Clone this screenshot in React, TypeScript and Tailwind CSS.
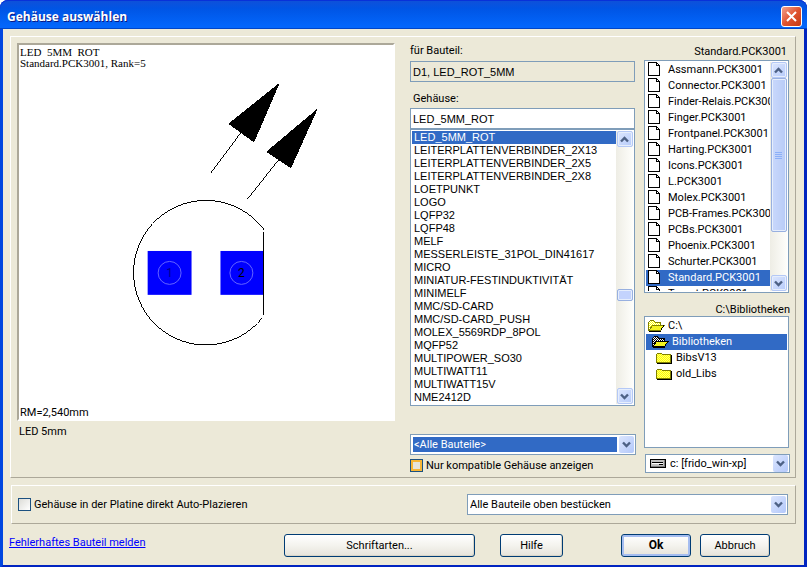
import type { ReactNode } from "react";

const packages = [
  "LED_5MM_ROT",
  "LEITERPLATTENVERBINDER_2X13",
  "LEITERPLATTENVERBINDER_2X5",
  "LEITERPLATTENVERBINDER_2X8",
  "LOETPUNKT",
  "LOGO",
  "LQFP32",
  "LQFP48",
  "MELF",
  "MESSERLEISTE_31POL_DIN41617",
  "MICRO",
  "MINIATUR-FESTINDUKTIVITÄT",
  "MINIMELF",
  "MMC/SD-CARD",
  "MMC/SD-CARD_PUSH",
  "MOLEX_5569RDP_8POL",
  "MQFP52",
  "MULTIPOWER_SO30",
  "MULTIWATT11",
  "MULTIWATT15V",
  "NME2412D",
];

const libraries = [
  "Assmann",
  "Connector",
  "Finder-Relais",
  "Finger",
  "Frontpanel",
  "Harting",
  "Icons",
  "L",
  "Molex",
  "PCB-Frames",
  "PCBs",
  "Phoenix",
  "Schurter",
  "Standard",
  "Target",
];

function Chevron({ up = false }: { up?: boolean }) {
  return (
    <svg width="9" height="7" viewBox="0 0 9 7" className={up ? "rotate-180" : ""} aria-hidden="true">
      <path d="M1 1.5 4.5 5 8 1.5" fill="none" stroke="#4d6185" strokeWidth="2.4" />
    </svg>
  );
}

function ScrollButton({ up = false, label }: { up?: boolean; label: string }) {
  return (
    <button
      type="button"
      aria-label={label}
      className="flex h-4 w-4 shrink-0 items-center justify-center rounded-xs border border-[#b4c8f6] bg-linear-to-br from-[#dce6fe] to-[#b6cbfa] shadow-[inset_0_0_0_1px_#e6eefc]"
    >
      <Chevron up={up} />
    </button>
  );
}

function ScrollBar({ children }: { children: ReactNode }) {
  return (
    <div className="flex w-[17px] shrink-0 flex-col items-center bg-linear-to-r from-[#eeede5] to-[#fefefb]">
      <ScrollButton up label="Nach oben" />
      <div className="flex w-4 flex-1 flex-col">{children}</div>
      <ScrollButton label="Nach unten" />
    </div>
  );
}

function Combo({
  id,
  label,
  options,
  selected = false,
  icon,
}: {
  id: string;
  label: string;
  options: string[];
  selected?: boolean;
  icon?: ReactNode;
}) {
  return (
    <div className="grid items-center border border-[#7f9db9] bg-white">
      <select
        id={id}
        aria-label={label}
        className={
          "col-start-1 row-start-1 w-full appearance-none border-white outline-none " +
          (selected
            ? "h-[19px] border-2 border-r-[18px] bg-[#316ac5] pl-px leading-[15px] text-white"
            : icon
              ? "h-[17px] border-r-[18px] bg-white pl-6 leading-[17px]"
              : "h-[19px] border-r-[18px] bg-white pl-[2px] leading-[19px]")
        }
      >
        {options.map((o) => (
          <option key={o}>{o}</option>
        ))}
      </select>
      {icon && <span className="pointer-events-none col-start-1 row-start-1 ml-1 justify-self-start">{icon}</span>}
      <span className="pointer-events-none col-start-1 row-start-1 mr-px flex h-[17px] w-[15px] items-center justify-center self-center justify-self-end rounded-xs bg-linear-to-br from-[#dce6fe] to-[#b3c8fa]">
        <Chevron />
      </span>
    </div>
  );
}

function PushButton({ children, className, strong = false }: { children: ReactNode; className: string; strong?: boolean }) {
  return (
    <button
      type="button"
      className={
        "h-[23px] shrink-0 rounded-[3px] border border-[#003c74] bg-linear-to-b from-white via-[#f4f3ee] to-[#e6e3da] " +
        (strong ? "text-[12px] font-bold shadow-[inset_0_0_0_2px_#a5bdf0] " : "shadow-[inset_-1px_-1px_0_#d9d5c8] ") +
        className
      }
    >
      {children}
    </button>
  );
}

function PageIcon() {
  return (
    <svg width="13" height="14" viewBox="0 0 13 14" shapeRendering="crispEdges" aria-hidden="true">
      <path d="M.5.5h8l3 3v10H.5z" fill="#fff" stroke="#000" />
      <path d="M8.5.5v3h3" fill="none" stroke="#000" />
    </svg>
  );
}

function Dither({ id, a, b }: { id: string; a: string; b: string }) {
  return (
    <pattern id={id} width="2" height="2" patternUnits="userSpaceOnUse">
      <path d="M0 0h2v2H0z" fill={a} />
      <path d="M0 0h1v1H0zM1 1h1v1H1z" fill={b} />
    </pattern>
  );
}

function ClosedFolder() {
  return (
    <svg width="16" height="13" viewBox="0 0 16 13" shapeRendering="crispEdges" aria-hidden="true">
      <Dither id="closed" a="#ffff00" b="#ffff70" />
      <path d="M.5 11.5v-8l1-1h4l1 1h8v8z" fill="url(#closed)" stroke="#808000" />
      <path d="M1 12.5h14.5V4" fill="none" stroke="#000" />
    </svg>
  );
}

function OpenFolder({ current = false }: { current?: boolean }) {
  const back = current ? "open-current" : "open-back";
  const front = current ? "front-current" : "front";
  return (
    <svg width="17" height="13" viewBox="0 0 17 13" shapeRendering="crispEdges" aria-hidden="true">
      <Dither id={back} a={current ? "#000" : "#ffff00"} b="#fff" />
      <Dither id={front} a="#ffff00" b="#e8e840" />
      <path
        d="M.5 11.5v-8l2-2h3l2 2h5v3"
        fill={current ? "url(#open-current)" : "url(#open-back)"}
        stroke={current ? "#000" : "#808000"}
      />
      <path
        d="M1 11.5 4.5 6.5h11.5l-3.5 5z"
        fill={current ? "url(#front-current)" : "url(#front)"}
        stroke={current ? "#000" : "#808000"}
      />
      <path d="M1 12.5h12M12.5 11.5l3.5-5" fill="none" stroke="#000" />
    </svg>
  );
}

function DriveIcon() {
  return (
    <svg width="16" height="9" viewBox="0 0 16 9" shapeRendering="crispEdges" aria-hidden="true">
      <rect x=".5" y=".5" width="15" height="8" fill="#c0c0c0" stroke="#000" />
      <path d="M2 3.5h11" stroke="#000" />
      <path d="M2 4.5h11" stroke="#fff" />
      <path d="M1 7.5h14M14.5 1v7" stroke="#808080" />
      <path d="M9 5.5h4" stroke="#000" />
    </svg>
  );
}

function PartDrawing() {
  return (
    <svg className="h-[338px] w-full" viewBox="18 69 375 338" role="img" aria-label="LED 5mm">
      <g stroke="#000" fill="none" shapeRendering="crispEdges">
        <path d="M210.5 172.5 240 133M247.5 198.5 278 160" />
        <path d="M278.5 83.5 228.5 123.5 253.5 141.5zM316.5 109.5 266.5 151.5 290.5 167.5z" fill="#000" />
        <path d="M263.5 229.5A72.5 72.5 0 1 0 262 318" />
      </g>
      <g fill="#00f">
        <rect x="147" y="251" width="44" height="44" />
        <rect x="220" y="251" width="43" height="44" />
      </g>
      <path d="M263.5 232v83" stroke="#000" shapeRendering="crispEdges" />
      <g fill="none" stroke="#6464ff">
        <circle cx="169" cy="273" r="11.5" />
        <circle cx="241" cy="273" r="11.5" />
      </g>
      <g textAnchor="middle" className="text-[12px]">
        <text x="169" y="277" fill="#00008b">1</text>
        <text x="241" y="277">2</text>
      </g>
    </svg>
  );
}

function Folder({ name, className, icon }: { name: string; className: string; icon: ReactNode }) {
  return (
    <li role="option" aria-selected={name === "Bibliotheken"} className={"flex h-4 items-center pb-[2px] " + className}>
      <span className="w-5 shrink-0">{icon}</span>
      {name}
    </li>
  );
}

export default function App() {
  return (
    <div className="bg-white font-[Roboto,'Liberation_Sans',sans-serif] text-[11px] leading-[13px] text-black">
      <div className="rounded-t-lg bg-[#0831d9] bg-linear-to-r from-[#0831d9] via-[#0855dd] to-[#001ea0]">
        <header className="flex h-[29px] items-center justify-between rounded-t-lg bg-linear-to-b from-[#0f50d8] from-0% via-[#0055e5] via-30% to-[#0366fb] to-90% pr-[5px] pl-[7px] shadow-[inset_0_1px_0_#0831d9,inset_0_-1px_0_#0046c8]">
          <h1 className="pt-1 font-['Open_Sans',sans-serif] text-[12px] leading-5 font-bold text-white [text-shadow:1px_1px_#0a1883]">
            Gehäuse auswählen
          </h1>
          <button
            type="button"
            aria-label="Schließen"
            className="mt-[3px] flex h-[21px] w-[21px] items-center justify-center rounded-[3px] border border-white bg-linear-to-br from-[#f0a08c] via-[#e0532f] to-[#c63a12]"
          >
            <svg width="11" height="11" viewBox="0 0 11 11" aria-hidden="true">
              <path d="m1 1 9 9m0-9-9 9" stroke="#fff" strokeWidth="2" />
            </svg>
          </button>
        </header>

        <div className="border-x-[3px] border-b-[3px] border-[#0046e0] border-r-[#0024c0] border-b-[#0024c0]">
          <main className="bg-[#ece9d8] pt-[7px] pr-2 pb-2 pl-[7px]">
            <section className="flex border border-t-white border-r-[#aca899] border-b-[#aca899] border-l-white pt-[6px] pr-[5px] pb-1 pl-[6px]">
              <figure className="min-w-0 flex-1">
                <div className="border-2 border-t-[#aca899] border-r-white border-b-white border-l-[#aca899] bg-white">
                  <div className="pt-[2px] pl-px font-['Liberation_Serif',serif] text-[11px] leading-[11px]">
                    <p className="whitespace-pre">LED  5MM  ROT</p>
                    <p>Standard.PCK3001, Rank=5</p>
                  </div>
                  <PartDrawing />
                  <p className="pl-px leading-3">RM=2,540mm</p>
                </div>
                <figcaption className="pt-1 pl-[2px]">LED 5mm</figcaption>
              </figure>

              <div className="ml-[15px] flex w-[226px] shrink-0 flex-col">
                <label htmlFor="part" className="leading-4">für Bauteil:</label>
                <input
                  id="part"
                  readOnly
                  defaultValue="D1, LED_ROT_5MM"
                  className="mt-[2px] mr-px h-[21px] border border-[#7f9db9] bg-[#ece9d8] px-[2px] font-['Liberation_Sans',Arial,sans-serif] outline-none"
                />
                <label htmlFor="package" className="mt-2 pl-[3px] leading-[18px]">Gehäuse:</label>
                <input
                  id="package"
                  defaultValue="LED_5MM_ROT"
                  className="mr-px h-[21px] border border-[#7f9db9] bg-white px-[2px] font-['Liberation_Sans',Arial,sans-serif] outline-none"
                />
                <div className="mr-px flex border border-[#7f9db9] bg-white p-px">
                  <ul
                    role="listbox"
                    aria-label="Gehäuse"
                    className="min-w-0 flex-1 font-['Liberation_Sans',Arial,sans-serif]"
                  >
                    {packages.map((name, i) => (
                      <li
                        key={name}
                        role="option"
                        aria-selected={i === 0}
                        className={"pl-[2px] whitespace-nowrap " + (i === 0 ? "bg-[#316ac5] text-white" : "")}
                      >
                        {name}
                      </li>
                    ))}
                  </ul>
                  <ScrollBar>
                    <div className="flex-[141]" />
                    <div className="h-3 rounded-xs border border-[#98b0e0] bg-[#c3d3fd] shadow-[inset_0_0_0_1px_#e6eefc]" />
                    <div className="flex-[86]" />
                  </ScrollBar>
                </div>
                <div className="mt-7">
                  <Combo id="filter" label="Filter" selected options={["<Alle Bauteile>"]} />
                </div>
                <label className="mt-1 flex items-center gap-[3px]">
                  <input
                    type="checkbox"
                    className="h-[13px] w-[13px] appearance-none border border-[#1c5180] bg-[#e6e4dc] shadow-[inset_0_0_0_2px_#f8b636]"
                  />
                  Nur kompatible Gehäuse anzeigen
                </label>
              </div>

              <div className="ml-2 flex w-[146px] shrink-0 flex-col">
                <p className="pr-[3px] text-right leading-[17px]">Standard.PCK3001</p>
                <div className="mr-px flex h-[233px] border border-[#7f9db9] bg-white p-px">
                  <ul role="listbox" aria-label="Bibliotheken" className="min-w-0 flex-1 overflow-hidden">
                    {libraries.map((name) => (
                      <li
                        key={name}
                        role="option"
                        aria-selected={name === "Standard"}
                        className={
                          "flex h-4 items-center gap-[7px] pb-[2px] pl-[2px] whitespace-nowrap " +
                          (name === "Standard" ? "bg-[#316ac5] text-white" : "")
                        }
                      >
                        <span className="shrink-0">
                          <PageIcon />
                        </span>
                        {name}.PCK3001
                      </li>
                    ))}
                  </ul>
                  <ScrollBar>
                    <div className="flex flex-[153] flex-col items-center justify-center gap-px rounded-xs border border-[#98b0e0] bg-linear-to-r from-[#c9d8fc] to-[#b8cbf6] shadow-[inset_0_0_0_1px_#e6eefc]">
                      <span className="h-px w-[7px] bg-[#8cb0f8]" />
                      <span className="h-px w-[7px] bg-[#8cb0f8]" />
                      <span className="h-px w-[7px] bg-[#8cb0f8]" />
                      <span className="h-px w-[7px] bg-[#8cb0f8]" />
                    </div>
                    <div className="flex-[43]" />
                  </ScrollBar>
                </div>
                <p className="mt-[11px] text-right leading-3">C:\Bibliotheken</p>
                <ul
                  role="listbox"
                  aria-label="Ordner"
                  className="mr-px h-[132px] border border-[#7f9db9] bg-white p-px"
                >
                  <Folder name="C:\" className="pl-[2px]" icon={<OpenFolder />} />
                  <Folder name="Bibliotheken" className="bg-[#316ac5] pl-[6px] text-white" icon={<OpenFolder current />} />
                  <Folder name="BibsV13" className="pl-[10px]" icon={<ClosedFolder />} />
                  <Folder name="old_Libs" className="pl-[10px]" icon={<ClosedFolder />} />
                </ul>
                <div className="mt-[6px] ml-px">
                  <Combo id="drive" label="Laufwerk" options={["c: [frido_win-xp]"]} icon={<DriveIcon />} />
                </div>
              </div>
            </section>

            <section className="mt-[7px] ml-px flex items-center justify-between border border-t-white border-r-[#aca899] border-b-[#aca899] border-l-white py-2 pr-[7px] pl-[6px]">
              <label className="flex items-center gap-[3px]">
                <input
                  type="checkbox"
                  className="h-[13px] w-[13px] appearance-none border border-[#1c5180] bg-linear-to-br from-[#dcdcd7] to-white"
                />
                Gehäuse in der Platine direkt Auto-Plazieren
              </label>
              <div className="w-[321px]">
                <Combo id="side" label="Bestückungsseite" options={["Alle Bauteile oben bestücken"]} />
              </div>
            </section>

            <footer className="mt-[10px] flex items-start pr-[26px]">
              <a href="#melden" className="-ml-px flex-1 pt-[2px] text-[#0000ff] underline">
                Fehlerhaftes Bauteil melden
              </a>
              <PushButton className="w-[191px]">Schriftarten...</PushButton>
              <PushButton className="ml-[25px] w-[63px]">Hilfe</PushButton>
              <PushButton className="ml-[58px] w-[70px]" strong>
                Ok
              </PushButton>
              <PushButton className="ml-[9px] w-[70px]">Abbruch</PushButton>
            </footer>
          </main>
        </div>
      </div>
    </div>
  );
}
